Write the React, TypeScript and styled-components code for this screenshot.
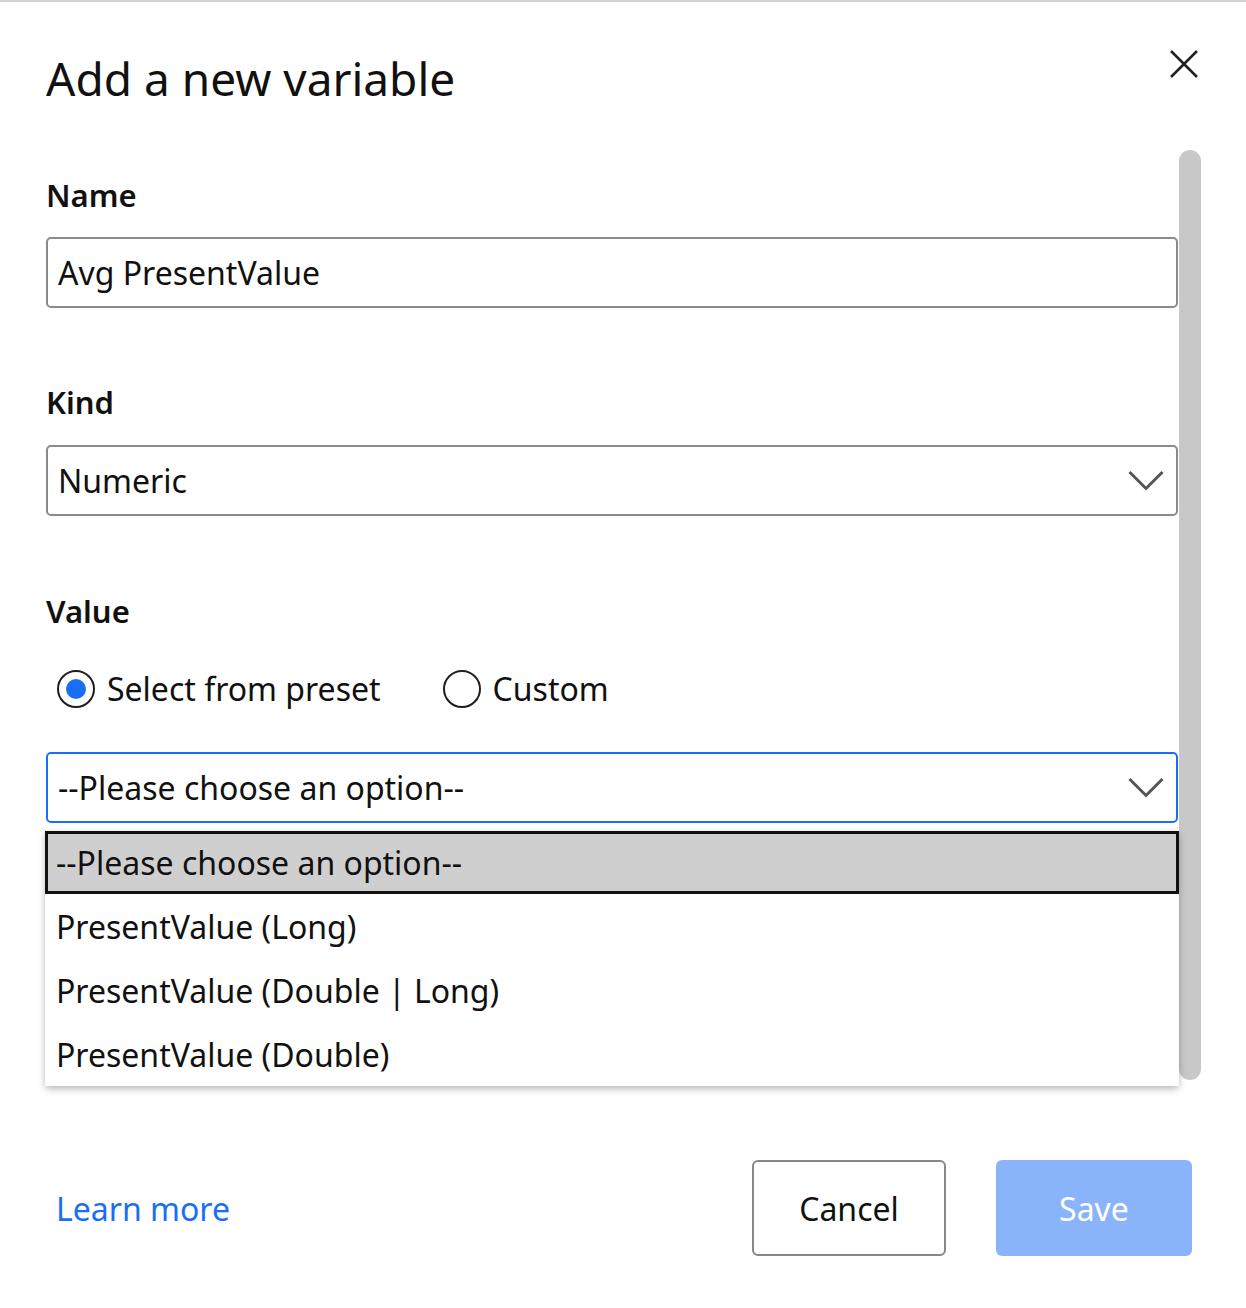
import React from "react";
import styled, { createGlobalStyle } from "styled-components";

const GlobalStyle = createGlobalStyle`
  html, body {
    margin: 0;
    padding: 0;
    background: #ffffff;
  }
  body {
    font-family: "Noto Sans", "Open Sans", sans-serif;
    color: #111;
  }
`;

const Dialog = styled.div`
  width: 1246px;
  height: 1308px;
  box-sizing: border-box;
  border-top: 2px solid #d2d2d2;
  display: flex;
  flex-direction: column;
  background: #fff;
`;

const Header = styled.div`
  display: flex;
  justify-content: space-between;
  align-items: flex-start;
  padding: 46px 48px 0 46px;
  height: 148px;
  box-sizing: border-box;
`;

const Title = styled.h1`
  margin: 0;
  font-size: 46px;
  line-height: 60px;
  font-weight: 400;
  color: #111;
`;

const CloseButton = styled.button`
  border: none;
  background: none;
  padding: 0;
  margin-top: 2px;
  width: 28px;
  height: 28px;
  display: flex;
  cursor: pointer;
`;

const Body = styled.div`
  display: flex;
  padding-left: 46px;
  height: 930px;
`;

const Content = styled.div`
  width: 1132px;
  padding-top: 25px;
  display: flex;
  flex-direction: column;
`;

const ScrollThumb = styled.div`
  margin-left: 1px;
  width: 22px;
  height: 930px;
  border-radius: 11px;
  background: #c8c8c8;
`;

const Label = styled.div<{ $top: number }>`
  margin-top: ${(p) => p.$top}px;
  font-size: 31px;
  line-height: 40px;
  font-weight: 600;
  color: #111;
`;

const Field = styled.div<{ $top: number; $focused?: boolean }>`
  position: relative;
  margin-top: ${(p) => p.$top}px;
  height: 71px;
  box-sizing: border-box;
  border: 2px solid ${(p) => (p.$focused ? "#1a6ef5" : "#8a8a8a")};
  border-radius: 5px;
  display: flex;
  align-items: center;
  justify-content: space-between;
  padding: 0 12px 0 10px;
  font-size: 32px;
  color: #111;
`;

const FieldText = styled.span`
  line-height: 40px;
`;

const RadioRow = styled.div`
  margin-top: 38px;
  height: 40px;
  display: flex;
  align-items: center;
  gap: 62px;
  padding-left: 11px;
`;

const RadioItem = styled.label`
  display: flex;
  align-items: center;
  gap: 12px;
  font-size: 32px;
  line-height: 40px;
  color: #111;
`;

const RadioCircle = styled.span<{ $checked?: boolean }>`
  width: 38px;
  height: 38px;
  box-sizing: border-box;
  border: 2px solid #1e1e1e;
  border-radius: 50%;
  display: flex;
  align-items: center;
  justify-content: center;

  &::after {
    content: "";
    display: ${(p) => (p.$checked ? "block" : "none")};
    width: 20px;
    height: 20px;
    border-radius: 50%;
    background: #1a6ef5;
  }
`;

const Menu = styled.ul`
  position: absolute;
  top: 77px;
  left: -3px;
  right: -3px;
  margin: 0;
  padding: 0;
  list-style: none;
  background: #fff;
  border-radius: 0 0 4px 4px;
  box-shadow: 0 3px 7px rgba(0, 0, 0, 0.28);
  z-index: 2;
`;

const MenuOption = styled.li<{ $active?: boolean }>`
  height: ${(p) => (p.$active ? 63 : 64)}px;
  box-sizing: border-box;
  display: flex;
  align-items: center;
  padding-left: ${(p) => (p.$active ? 8 : 11)}px;
  font-size: 32px;
  color: #111;
  background: ${(p) => (p.$active ? "#cfcfcf" : "#fff")};
  border: ${(p) => (p.$active ? "3px solid #111" : "none")};
`;

const Footer = styled.div`
  margin-top: 80px;
  display: flex;
  align-items: center;
  justify-content: space-between;
  padding: 0 54px 0 56px;
`;

const LearnMore = styled.a`
  font-size: 32px;
  color: #1a6ef5;
  text-decoration: none;
`;

const Buttons = styled.div`
  display: flex;
  gap: 50px;
`;

const Button = styled.button<{ $primary?: boolean }>`
  width: ${(p) => (p.$primary ? 196 : 194)}px;
  height: 96px;
  box-sizing: border-box;
  border-radius: 6px;
  font-family: "Noto Sans", "Open Sans", sans-serif;
  font-size: 32px;
  border: ${(p) => (p.$primary ? "none" : "2px solid #878787")};
  background: ${(p) => (p.$primary ? "#8ab4f9" : "#fff")};
  color: ${(p) => (p.$primary ? "#fff" : "#111")};
  padding: 0;
`;

const Chevron = () => (
  <svg width="36" height="22" viewBox="0 0 36 22" fill="none">
    <path d="M1.5 2 L18 18.5 L34.5 2" stroke="#555" strokeWidth="3" />
  </svg>
);

const CloseIcon = () => (
  <svg width="28" height="28" viewBox="0 0 28 28" fill="none">
    <path d="M1 1 L27 27 M27 1 L1 27" stroke="#222" strokeWidth="2.6" />
  </svg>
);

const options = [
  "--Please choose an option--",
  "PresentValue (Long)",
  "PresentValue (Double | Long)",
  "PresentValue (Double)",
];

export default function App() {
  return (
    <>
      <GlobalStyle />
      <Dialog>
        <Header>
          <Title>Add a new variable</Title>
          <CloseButton aria-label="Close">
            <CloseIcon />
          </CloseButton>
        </Header>
        <Body>
          <Content>
            <Label $top={0}>Name</Label>
            <Field $top={22}>
              <FieldText>Avg PresentValue</FieldText>
            </Field>

            <Label $top={74}>Kind</Label>
            <Field $top={23}>
              <FieldText>Numeric</FieldText>
              <Chevron />
            </Field>

            <Label $top={75}>Value</Label>
            <RadioRow>
              <RadioItem>
                <RadioCircle $checked />
                Select from preset
              </RadioItem>
              <RadioItem>
                <RadioCircle />
                Custom
              </RadioItem>
            </RadioRow>

            <Field $top={43} $focused>
              <FieldText>--Please choose an option--</FieldText>
              <Chevron />
              <Menu>
                {options.map((o, i) => (
                  <MenuOption key={o} $active={i === 0}>
                    {o}
                  </MenuOption>
                ))}
              </Menu>
            </Field>
          </Content>
          <ScrollThumb />
        </Body>
        <Footer>
          <LearnMore href="#">Learn more</LearnMore>
          <Buttons>
            <Button>Cancel</Button>
            <Button $primary>Save</Button>
          </Buttons>
        </Footer>
      </Dialog>
    </>
  );
}
